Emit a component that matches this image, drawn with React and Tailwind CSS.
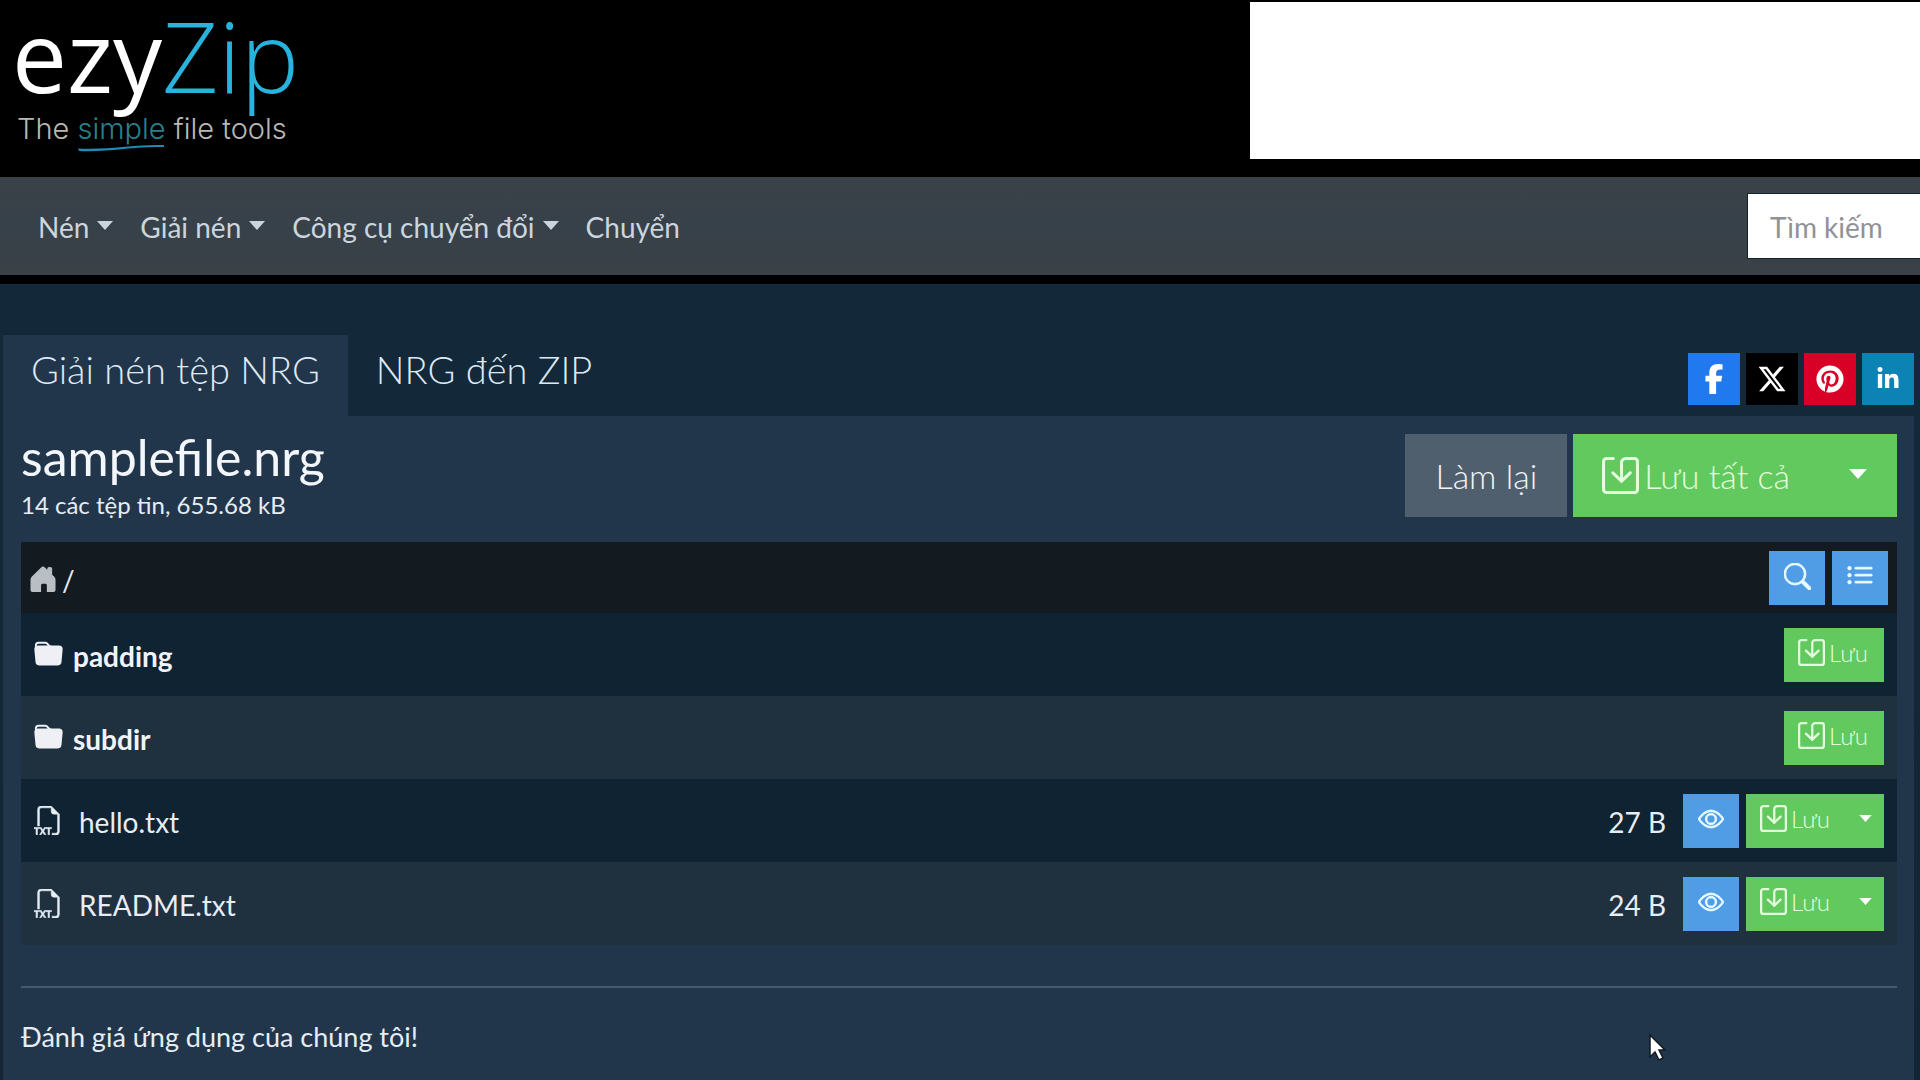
import React from "react";
import { BsEye, BsFiletypeTxt, BsFolderFill, BsListUl, BsSearch } from "react-icons/bs";
import { FaFacebookF, FaLinkedinIn, FaPinterest, FaXTwitter } from "react-icons/fa6";

const NAV = [
  { label: "Nén", menu: true },
  { label: "Giải nén", menu: true },
  { label: "Công cụ chuyển đổi", menu: true },
  { label: "Chuyển", menu: false },
];

const SOCIAL = [
  { name: "Facebook", Icon: FaFacebookF, tone: "bg-[#2079ee]", size: "h-[30px] w-[22px]" },
  { name: "X", Icon: FaXTwitter, tone: "bg-black", size: "size-[30px]" },
  { name: "Pinterest", Icon: FaPinterest, tone: "bg-[#d80027]", size: "size-7" },
  { name: "LinkedIn", Icon: FaLinkedinIn, tone: "bg-[#0d83b5]", size: "size-6" },
];

const FILES = [
  { name: "padding", folder: true },
  { name: "subdir", folder: true },
  { name: "hello.txt", size: "27 B" },
  { name: "README.txt", size: "24 B" },
];

function Caret({ className }) {
  return (
    <svg viewBox="0 0 16 9" className={className} fill="currentColor" aria-hidden="true">
      <path d="M0 0h16L8 9z" />
    </svg>
  );
}

function SaveIcon({ className }) {
  return (
    <svg
      viewBox="0 0 36 36"
      className={className}
      fill="none"
      stroke="currentColor"
      strokeWidth="3"
      strokeLinecap="round"
      strokeLinejoin="round"
      aria-hidden="true"
    >
      <path d="M11 1.500H4.500a3 3 0 0 0-3 3v27a3 3 0 0 0 3 3h27a3 3 0 0 0 3-3v-27a3 3 0 0 0-3-3H23a4 4 0 0 0-4 4v18" />
      <path d="m10.500 15.500 8.500 8 8.500-8" />
    </svg>
  );
}

function HomeIcon({ className }) {
  return (
    <svg viewBox="0 0 26 27" className={className} fill="currentColor" aria-hidden="true">
      <path d="M11 1.500q2-2 4 0l2.500 2.500V2.500q0-1.500 2.500-1.500t2.500 1.500V9l2 2q1.500 1.500 1.500 3v11q0 2-2 2h-7v-7q0-1.500-1.500-1.500h-3Q11 18.500 11 20v7H2q-2 0-2-2V14q0-1.500 1.500-3z" />
    </svg>
  );
}

function Logo() {
  return (
    <a href="#" className="relative ml-4 block h-[177px] w-[290px]" aria-label="ezyZip">
      <span className="absolute -left-1 top-[5px] flex items-baseline font-['Open_Sans',sans-serif] text-[98px] leading-[100px]">
        <span className="text-white">ezy</span>
        <span className="font-light text-[#27b3dd]">Zip</span>
      </span>
      <span className="absolute left-px top-[110px] whitespace-nowrap font-['Inter',sans-serif] text-[29px] font-light leading-[38px] text-[#b8b8b4]">
        The <span className="text-[#29808c]">simple</span> file tools
      </span>
      <svg className="absolute left-[62px] top-[144px] h-2 w-[86px]" viewBox="0 0 86 8" aria-hidden="true">
        <path d="M0 4.500Q20 5.500 50 2.500Q66 .5 86 1v2Q66 2.500 50 4.500Q20 8 1 7z" fill="#1f8bb5" />
      </svg>
    </a>
  );
}

function SaveButton({ menu }) {
  return (
    <span className="inline-flex h-[54px] bg-[#62c95f] text-[#e4ffdd]">
      <button type="button" className="flex items-center gap-1 pb-1 pl-[14px] pr-4 text-2xl font-light">
        <SaveIcon className="size-[27px]" />
        Lưu
      </button>
      {menu && (
        <button type="button" aria-label="Tùy chọn lưu" className="flex w-[38px] items-center justify-center pb-[5px]">
          <Caret className="h-[7px] w-[13px] text-white" />
        </button>
      )}
    </span>
  );
}

function BlueButton({ label, children }) {
  return (
    <button
      type="button"
      aria-label={label}
      className="flex h-[54px] w-14 items-center justify-center bg-[#519de5] pb-[3px] text-[#e9fbff]"
    >
      {children}
    </button>
  );
}

export default function App() {
  return (
    <div className="relative flex min-h-screen flex-col bg-gradient-to-b from-[#132a3c] to-[#132534] font-['Lato',sans-serif] text-[28px] leading-9 text-[#e6edf5]">
      <header className="flex justify-between bg-black">
        <Logo />
        <div className="mt-[2px] h-[157px] w-[670px] bg-white" />
      </header>

      <nav className="flex h-[107px] items-center justify-between border-b-[9px] border-black bg-gradient-to-b from-[#3b4148] via-[#374149] to-[#3a4147] pl-[38px] text-[#cbd5de]">
        <ul className="flex items-center gap-[27px]">
          {NAV.map(({ label, menu }) => (
            <li key={label}>
              <a href="#" className="flex items-center gap-2 pt-[2px]">
                {label}
                {menu && <Caret className="mb-1 h-[9px] w-4" />}
              </a>
            </li>
          ))}
        </ul>
        <input
          type="text"
          aria-label="Tìm kiếm"
          placeholder="Tìm kiếm"
          className="h-16 w-[172px] bg-white pl-[22px] pt-0.5 text-gray-800 outline-1 outline-[#12222b] placeholder:text-[#909294]"
        />
      </nav>

      <main className="mt-[51px] flex grow flex-col pl-[3px] pr-[6px]">
        <div className="flex items-end justify-between">
          <div className="flex text-[38px] font-light leading-[46px] text-[#dfe9f5]" role="tablist">
            <button type="button" role="tab" aria-selected="true" className="h-[81px] bg-[#22364b] px-7 pb-[14px]">
              Giải nén tệp NRG
            </button>
            <button type="button" role="tab" aria-selected="false" className="h-[81px] px-7 pb-[14px]">
              NRG đến ZIP
            </button>
          </div>
          <div className="mb-[11px] flex gap-[6px]">
            {SOCIAL.map(({ name, Icon, tone, size }) => (
              <a key={name} href="#" aria-label={name} className={`flex h-[52px] w-[52px] items-center justify-center text-white ${tone}`}>
                <Icon className={size} />
              </a>
            ))}
          </div>
        </div>

        <section className="grow bg-[#22364b] pl-[18px] pr-[17px]">
          <div className="flex items-start justify-between pt-[13px]">
            <div>
              <h1 className="text-[50px] leading-[56px] text-[#f3f6fa]">samplefile.nrg</h1>
              <p className="text-2xl leading-[40px]">14 các tệp tin, 655.68 kB</p>
            </div>
            <div className="mt-[5px] flex gap-[6px] text-[34px] font-light leading-[44px]">
              <button type="button" className="h-[83px] bg-[#505f6e] px-[30px] text-[#f0f4f8]">
                Làm lại
              </button>
              <span className="flex h-[83px] bg-[#62c95f] text-[#e4ffdd]">
                <button type="button" className="flex items-center gap-[5px] pl-[29px] pr-7">
                  <SaveIcon className="size-[37px]" />
                  Lưu tất cả
                </button>
                <button type="button" aria-label="Tùy chọn lưu tất cả" className="flex w-[79px] items-center justify-center pb-[3px]">
                  <Caret className="h-[10px] w-[18px] text-white" />
                </button>
              </span>
            </div>
          </div>

          <div className="mt-[17px] flex h-[71px] items-center justify-between bg-[#131a20] pl-[9px] pr-[9px]">
            <a href="#" className="flex items-center gap-[6px] pt-[4px]">
              <HomeIcon className="mb-[2px] size-[26px] text-[#b9bec4]" />
              /
            </a>
            <div className="flex gap-[7px]">
              <BlueButton label="Tìm kiếm tệp">
                <BsSearch className="size-[27px]" strokeWidth="0.5" />
              </BlueButton>
              <BlueButton label="Danh sách">
                <BsListUl className="size-7" strokeWidth="0.5" />
              </BlueButton>
            </div>
          </div>

          <table className="w-full">
            <tbody>
              {FILES.map(({ name, folder, size }) => (
                <tr key={name} className="h-[83px] odd:bg-[#102332] even:bg-[#1f303f]">
                  <td className="pl-[13px]">
                    <a href="#" className="flex items-center">
                      {folder ? (
                        <BsFolderFill className="mr-[10px] size-[29px] text-[#eef0f5]" />
                      ) : (
                        <BsFiletypeTxt className="mr-4 size-[29px]" strokeWidth="0.3" />
                      )}
                      <span className={folder ? "pt-[2px] font-bold text-[#f0f4f9]" : "pt-[2px]"}>{name}</span>
                    </a>
                  </td>
                  <td className="pr-[13px]">
                    <div className="flex items-center justify-end">
                      {size && <span className="mr-[17px] pt-[3px]">{size}</span>}
                      {size && (
                        <span className="mr-[7px]">
                          <BlueButton label={`Xem ${name}`}>
                            <BsEye className="size-[26px]" strokeWidth="0.5" />
                          </BlueButton>
                        </span>
                      )}
                      <SaveButton menu={!folder} />
                    </div>
                  </td>
                </tr>
              ))}
            </tbody>
          </table>

          <hr className="mt-[41px] border-t-2 border-[#475a6e]" />
          <p className="pb-6 pt-[31px] text-[27px]">Đánh giá ứng dụng của chúng tôi!</p>
        </section>
      </main>

      <svg className="pointer-events-none absolute left-[1648px] top-[1033px] h-[30px] w-5" viewBox="0 0 20 30" aria-hidden="true">
        <path d="M2 2v22l5-5 4 8 4-2-4-8h6z" fill="#fff" stroke="#111a24" strokeWidth="1.500" />
      </svg>
    </div>
  );
}
